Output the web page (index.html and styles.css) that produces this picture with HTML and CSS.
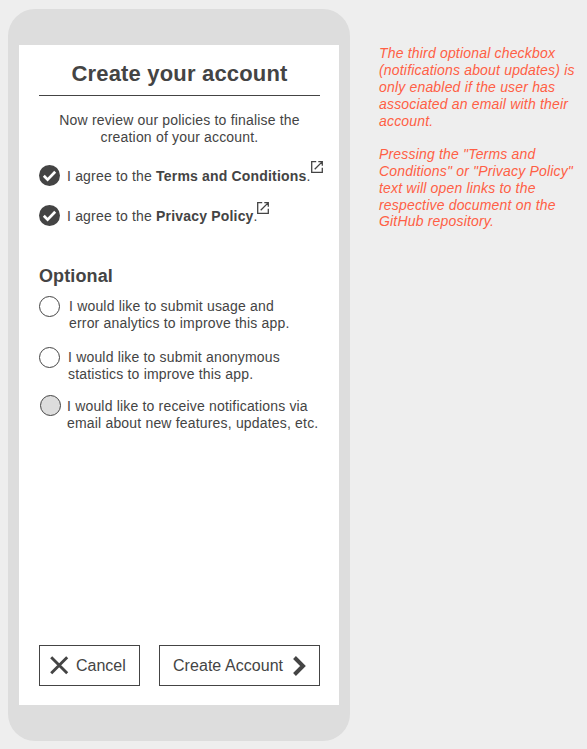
FILE: index.html
```html
<!DOCTYPE html>
<html lang="en">
<head>
<meta charset="utf-8">
<title>Create your account</title>
<link rel="stylesheet" href="styles.css">
</head>
<body>
<main class="phone">
  <section class="screen">
    <h1>Create your account</h1>
    <p class="intro">Now review our policies to finalise the<br>creation of your account.</p>
    <div class="agree">
      <svg class="check" viewBox="0 0 21 21"><circle cx="10.5" cy="10.5" r="10.5"/><path d="M4.8 10.7l3.8 3.9 7.6-7.9"/></svg>
      <span>I agree to the <b>Terms and Conditions</b>.</span>
      <svg class="link" viewBox="0 0 12 12"><path d="M5.2.7H.7v10.6h10.6V6.8M7.3.7h4v4M11.1.9L3.7 8.3"/></svg>
    </div>
    <div class="agree">
      <svg class="check" viewBox="0 0 21 21"><circle cx="10.5" cy="10.5" r="10.5"/><path d="M4.8 10.7l3.8 3.9 7.6-7.9"/></svg>
      <span>I agree to the <b>Privacy Policy</b>.</span>
      <svg class="link second" viewBox="0 0 12 12"><path d="M5.2.7H.7v10.6h10.6V6.8M7.3.7h4v4M11.1.9L3.7 8.3"/></svg>
    </div>
    <h2>Optional</h2>
    <div class="option usage"><i class="radio"></i><span>I would like to submit usage and<br>error analytics to improve this app.</span></div>
    <div class="option stats"><i class="radio"></i><span>I would like to submit anonymous<br>statistics to improve this app.</span></div>
    <div class="option updates"><i class="radio disabled"></i><span>I would like to receive notifications via<br>email about new features, updates, etc.</span></div>
    <div class="actions">
      <button class="cancel"><svg width="19" height="19" viewBox="0 0 19 19"><path d="M1.2 1.2l16 16M17.2 1.2l-16 16" stroke-width="2.9"/></svg>Cancel</button>
      <button class="create">Create Account<svg width="13" height="20" viewBox="0 0 13 20"><path d="M1.5 1.5L10 10l-8.5 8.5" stroke-width="4"/></svg></button>
    </div>
  </section>
</main>
<aside class="notes">
  <p>The third optional checkbox<br>(notifications about updates) is<br>only enabled if the user has<br>associated an email with their<br>account.</p>
  <p>Pressing the "Terms and<br>Conditions" or "Privacy Policy"<br>text will open links to the<br>respective document on the<br>GitHub repository.</p>
</aside>
</body>
</html>
```
FILE: styles.css
```css
* { box-sizing: border-box; }
body {
  margin: 0;
  height: 749px;
  padding: 9px 0 0 8px;
  display: flex;
  align-items: flex-start;
  overflow: hidden;
  background: #eee;
  color: #444;
  font: 14px/17px "Liberation Sans", Arial, sans-serif;
  letter-spacing: 0.18px;
  white-space: nowrap;
}
h1, h2, p { margin: 0; }
svg { flex: none; fill: none; stroke: #444; }
.phone {
  flex: none;
  width: 342px;
  height: 732px;
  padding: 36px 11px;
  border-radius: 27px;
  background: #ddd;
}
.screen {
  display: flex;
  flex-direction: column;
  width: 320px;
  height: 660px;
  padding: 16px 19px 19px 20px;
  background: #fff;
}
h1 {
  height: 35px;
  border-bottom: 1px solid #444;
  font-size: 22px;
  line-height: 26px;
  text-align: center;
}
.intro { height: 34px; margin: 16px 0 19px; text-align: center; }
.agree { display: flex; align-items: center; height: 21px; margin-bottom: 19px; }
.check { width: 21px; height: 21px; margin-right: 7px; }
.check circle { fill: #444; stroke: none; }
.check path { stroke: #fff; stroke-width: 2.7; }
.agree span { padding-top: 2px; }
.link { width: 12px; height: 12px; margin: -17px 0 0 0; stroke-width: 1.3; }
.link.second { margin: -15px 0 0 -0.5px; }
h2 { margin: 20px 0 9px; font-size: 18px; line-height: 22px; letter-spacing: 0.12px; }
.option { display: flex; align-items: flex-start; height: 34px; }
.radio { flex: none; width: 21px; height: 21px; border: 1px solid #444; border-radius: 50%; }
.disabled { background: #ddd; }
.usage .radio { margin-right: 9px; }
.option span { padding-top: 2px; }
.stats { margin-top: 17px; }
.stats .radio { margin-right: 8px; }
.updates { margin-top: 14px; padding-left: 1px; }
.updates .radio { margin-right: 6px; }
.updates span { padding-top: 3px; }
.actions { display: flex; justify-content: space-between; margin-top: auto; }
button {
  display: flex;
  align-items: center;
  height: 41px;
  padding: 0;
  border: 1px solid #444;
  border-radius: 0;
  background: #fff;
  color: #444;
  font: 16px/19px "Liberation Sans", Arial, sans-serif;
}
.cancel { width: 101px; gap: 7px; padding-left: 10px; }
.create { width: 161px; gap: 10px; padding-left: 13px; letter-spacing: 0.05px; }
.notes {
  margin: 36.4px 0 0 29px;
  color: #ff5f45;
  font-style: italic;
  line-height: 16.8px;
}
.notes p + p { margin-top: 16.8px; }
```
